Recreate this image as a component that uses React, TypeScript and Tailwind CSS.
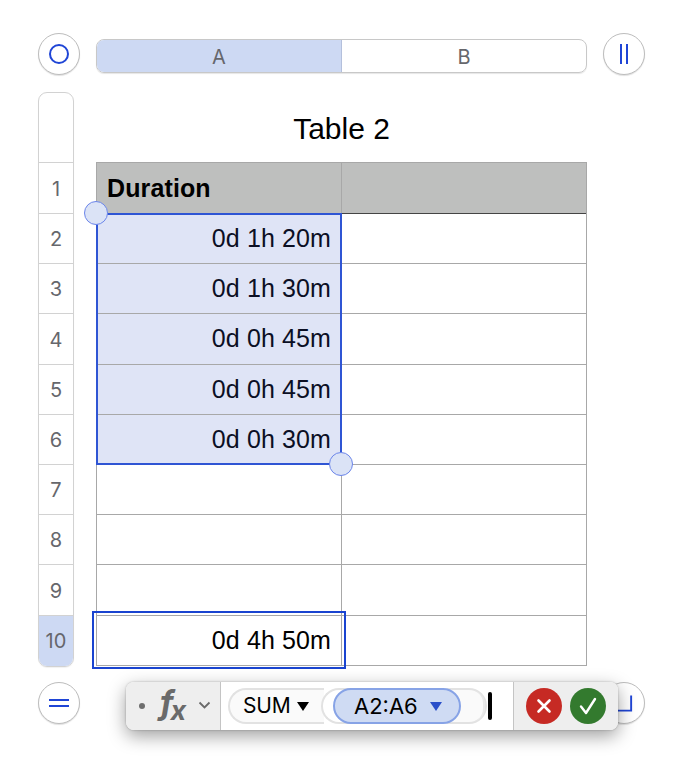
const SANS = "font-['Liberation_Sans',Arial,sans-serif]";

const rows: { n: number; h: number; text?: string; sel?: boolean }[] = [
  { n: 2, h: 50, text: "0d 1h 20m", sel: true },
  { n: 3, h: 50, text: "0d 1h 30m", sel: true },
  { n: 4, h: 51, text: "0d 0h 45m", sel: true },
  { n: 5, h: 50, text: "0d 0h 45m", sel: true },
  { n: 6, h: 50, text: "0d 0h 30m", sel: true },
  { n: 7, h: 50 },
  { n: 8, h: 50 },
  { n: 9, h: 51 },
  { n: 10, h: 50, text: "0d 4h 50m" },
];

function RoundButton({ children }: { children: React.ReactNode }) {
  return (
    <div className="w-[42px] h-[42px] shrink-0 rounded-full bg-white border border-[#bdbdbd] shadow-[0_1px_1px_rgba(0,0,0,0.12)] flex items-center justify-center">
      {children}
    </div>
  );
}

export default function App() {
  return (
    <div className={`relative w-[698px] h-[774px] bg-white overflow-hidden pt-[33px] pl-[38px] ${SANS}`}>
      {/* top bar */}
      <div className="flex items-start w-[607px]">
        <RoundButton>
          <div className="w-[20px] h-[20px] rounded-full border-2 border-[#1f45d6]" />
        </RoundButton>
        <div className="ml-[16px] mt-[6px] w-[491px] h-[34px] flex rounded-[8px] border border-[#c8c8c8] shadow-[0_1px_1px_rgba(0,0,0,0.1)] overflow-hidden font-['Inter',sans-serif] text-[20px] text-[#66676c]">
          <div className="w-[245px] bg-[#cdd9f3] border-r border-[#b4c0dc] flex items-center justify-center pt-[1px]">A</div>
          <div className="flex-1 flex items-center justify-center pt-[1px]">B</div>
        </div>
        <div className="ml-[16px]">
          <RoundButton>
            <div className="flex gap-[4px]">
              <div className="w-[2px] h-[20px] bg-[#1f45d6]" />
              <div className="w-[2px] h-[20px] bg-[#1f45d6]" />
            </div>
          </RoundButton>
        </div>
      </div>

      {/* main */}
      <div className="flex mt-[17px]">
        {/* row headers */}
        <div className="w-[36px] h-[575px] rounded-[9px] border border-[#d2d2d2] overflow-hidden flex flex-col font-['Inter',sans-serif] text-[20px] text-[#66676c] shadow-[0_1px_1px_rgba(0,0,0,0.06)]">
          <div className="h-[70px] border-b border-[#d2d2d2]" />
          <div className="h-[51px] border-b border-[#d2d2d2] flex items-center justify-center pt-[1px]">1</div>
          {rows.map((r) => (
            <div
              key={r.n}
              className={
                r.n === 10
                  ? "flex-1 bg-[#cdd9f3] flex items-center justify-center"
                  : "border-b border-[#d2d2d2] flex items-center justify-center pt-[1px]"
              }
              style={r.n === 10 ? undefined : { height: r.h }}
            >
              {r.n}
            </div>
          ))}
        </div>

        {/* table */}
        <div className="ml-[22px] w-[491px]">
          <div className="h-[70px] flex items-center justify-center text-[30px] text-black pt-[3px]">Table 2</div>
          <div className="relative w-[491px] border border-[#a8a8a8] text-[25px] tracking-[0.12px] text-black">
            <div className="flex h-[51px] bg-[#bebfbe] border-b border-[#444]">
              <div className="w-[245px] border-r border-[#a8a8a8] px-[10px] pt-[1px] flex items-center font-bold">Duration</div>
              <div className="flex-1" />
            </div>
            {rows.map((r, i) => (
              <div
                key={r.n}
                className={i === rows.length - 1 ? "flex" : "flex border-b border-[#a8a8a8]"}
                style={{ height: i === rows.length - 1 ? r.h - 1 : r.h }}
              >
                <div
                  className={
                    r.sel
                      ? "w-[245px] border-r border-[#a8a8a8] bg-[#dfe4f6] px-[10px] flex items-center justify-end text-[#0b0f24]"
                      : "w-[245px] border-r border-[#a8a8a8] px-[10px] flex items-center justify-end"
                  }
                >
                  {r.text}
                </div>
                <div className="flex-1" />
              </div>
            ))}
            {/* selection range */}
            <div className="absolute left-[-1px] top-[50px] w-[246px] h-[252px] border-2 border-[#2f55d4]" />
            <div className="absolute left-[-13px] top-[38px] w-[24px] h-[24px] rounded-full bg-[#dbe3f6] border border-[#6b85ea]" />
            <div className="absolute left-[232px] top-[289px] w-[24px] h-[24px] rounded-full bg-[#dbe3f6] border border-[#6b85ea]" />
            {/* active cell */}
            <div className="absolute left-[-5px] top-[448px] w-[254px] h-[58px] border-2 border-[#1a44d0]" />
          </div>
        </div>
      </div>

      {/* bottom buttons */}
      <div className="flex justify-between w-[607px] mt-[15px]">
        <RoundButton>
          <div className="flex flex-col gap-[4px]">
            <div className="w-[20px] h-[2px] bg-[#1f45d6]" />
            <div className="w-[20px] h-[2px] bg-[#1f45d6]" />
          </div>
        </RoundButton>
        <RoundButton>
          <svg width="42" height="42" viewBox="0 0 42 42" fill="none">
            <path d="M28.5 13V29H8" stroke="#1f45d6" strokeWidth="2" />
          </svg>
        </RoundButton>
      </div>

      {/* formula bar */}
      <div className="absolute left-[126px] top-[682px] w-[492px] h-[48px] rounded-[8px] bg-white flex overflow-hidden shadow-[0_6px_18px_rgba(0,0,0,0.38),0_0_2px_rgba(0,0,0,0.3)]">
        <div className="w-[95px] bg-[#eeeeee] border-r border-[#c4c4c4] flex items-center pl-[13px] text-[#6a6a6a]">
          <div className="w-[6px] h-[6px] rounded-full bg-[#6e6e6e]" />
          <span className="ml-[15px] font-['Inter',sans-serif] italic font-bold text-[33px] leading-[46px] -mt-[5px]">
            f<span className="relative top-[6px] -ml-[3px] text-[27px]">x</span>
          </span>
          <svg className="ml-[12px] -mt-[3px]" width="13" height="8" viewBox="0 0 13 8" fill="none">
            <path d="M1.5 1.5L6.5 6.5L11.5 1.5" stroke="#6a6a6a" strokeWidth="1.8" />
          </svg>
        </div>
        <div className="flex-1 flex items-center pl-[7px] text-black relative">
          <div className="w-[96px] h-[36px] rounded-l-full border-2 border-r-0 border-[#e2e2e2] bg-[#fafafa] flex items-center pl-[13px] font-['Inter',sans-serif] text-[21px] tracking-[-0.2px]">
            SUM
            <span className="ml-[7px] w-0 h-0 border-x-[6px] border-x-transparent border-t-[9px] border-t-black" />
          </div>
          <div className="-ml-[3px] w-[30px] h-[36px] rounded-l-full border-2 border-r-0 border-[#e2e2e2] bg-white" />
          <div className="-ml-[18px] relative z-10 w-[128px] h-[36px] rounded-full border-2 border-[#87a3e6] bg-[#cfdbf3] flex items-center pl-[19px] font-['Inter',sans-serif] text-[22px]">
            A2:A6
            <span className="ml-[12px] w-0 h-0 border-x-[6px] border-x-transparent border-t-[9px] border-t-[#2a4fc9]" />
          </div>
          <div className="-ml-[14px] w-[40px] h-[36px] rounded-r-full border-2 border-l-0 border-[#e2e2e2] bg-[#fafafa] flex justify-end">
            <div className="w-[14px] h-full rounded-r-full border-r-2 border-[#e8e8e8]" />
          </div>
          <div className="ml-[1px] w-[4px] h-[28px] rounded-full bg-black" />
        </div>
        <div className="w-[105px] bg-[#eeeeee] border-l border-[#c4c4c4] flex items-center pl-[12px] gap-[8px]">
          <div className="w-[36px] h-[36px] rounded-full bg-[#c62a24] flex items-center justify-center">
            <svg width="18" height="18" viewBox="0 0 18 18" fill="none">
              <path d="M3.5 3.5L14.5 14.5M14.5 3.5L3.5 14.5" stroke="white" strokeWidth="2.6" strokeLinecap="round" />
            </svg>
          </div>
          <div className="w-[36px] h-[36px] rounded-full bg-[#337a2e] flex items-center justify-center">
            <svg width="22" height="20" viewBox="0 0 22 20" fill="none">
              <path d="M4 10.5L9 17L18 3" stroke="white" strokeWidth="2.4" strokeLinecap="round" strokeLinejoin="round" />
            </svg>
          </div>
        </div>
      </div>
    </div>
  );
}
